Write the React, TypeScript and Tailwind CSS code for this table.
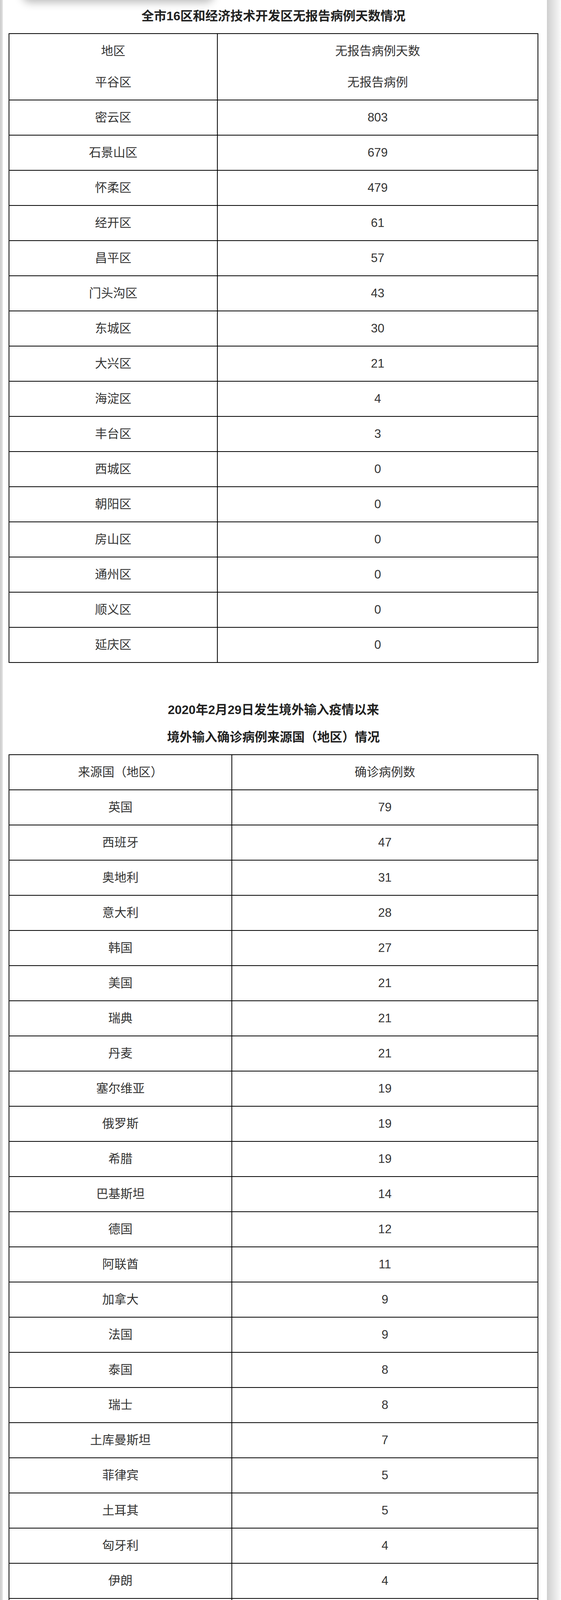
import React from 'react';

const districts: [string, string][] = [
  ['密云区', '803'],
  ['石景山区', '679'],
  ['怀柔区', '479'],
  ['经开区', '61'],
  ['昌平区', '57'],
  ['门头沟区', '43'],
  ['东城区', '30'],
  ['大兴区', '21'],
  ['海淀区', '4'],
  ['丰台区', '3'],
  ['西城区', '0'],
  ['朝阳区', '0'],
  ['房山区', '0'],
  ['通州区', '0'],
  ['顺义区', '0'],
  ['延庆区', '0'],
];

const sources: [string, string][] = [
  ['英国', '79'],
  ['西班牙', '47'],
  ['奥地利', '31'],
  ['意大利', '28'],
  ['韩国', '27'],
  ['美国', '21'],
  ['瑞典', '21'],
  ['丹麦', '21'],
  ['塞尔维亚', '19'],
  ['俄罗斯', '19'],
  ['希腊', '19'],
  ['巴基斯坦', '14'],
  ['德国', '12'],
  ['阿联酋', '11'],
  ['加拿大', '9'],
  ['法国', '9'],
  ['泰国', '8'],
  ['瑞士', '8'],
  ['土库曼斯坦', '7'],
  ['菲律宾', '5'],
  ['土耳其', '5'],
  ['匈牙利', '4'],
  ['伊朗', '4'],
  ['津巴布韦', '3'],
  ['印度尼西亚', '2'],
  ['巴布亚新几内亚', '2'],
  ['摩尔多瓦', '2'],
  ['波兰', '2'],
  ['埃塞俄比亚', '2'],
  ['日本', '2'],
  ['卢森堡', '1'],
  ['挪威', '1'],
  ['比利时', '1'],
  ['巴西', '1'],
  ['荷兰', '1'],
  ['墨西哥', '1'],
  ['约旦', '1'],
  ['赤道几内亚', '1'],
  ['乌兹别克斯坦', '1'],
  ['新加坡', '1'],
  ['中国香港', '249'],
  ['中国台湾', '2'],
  ['合计', '704'],
];

const cell = 'border-2 border-black p-0 text-center align-middle leading-[88px]';

const Row: React.FC<{ name: string; value: string; firstWidth: string }> = ({ name, value, firstWidth }) => (
  <tr className="h-[90px]">
    <td className={`${cell} ${firstWidth}`}>{name}</td>
    <td className={cell}>{value}</td>
  </tr>
);

export default function App() {
  return (
    <div
      className="flex h-[6208px] w-[1435px] overflow-hidden bg-white text-[#333]"
      style={{ fontFamily: '"Liberation Sans", "Noto Sans CJK SC", sans-serif' }}
    >
      {/* left edge */}
      <div className="w-[7px] shrink-0 bg-gradient-to-r from-[#cbcbcb] to-[#e0e0e0]" />

      {/* article */}
      <div className="relative w-[1392px] shrink-0 bg-white pb-[29px] pl-[15px] pr-[22px] pt-[6px]">
        {/* shadow of the card above */}
        <div className="absolute -top-[40px] left-[50px] h-[40px] w-[490px] rounded-[20px] bg-white shadow-[0_6px_22px_rgba(0,0,0,0.28)]" />

        <h2 className="mb-[9px] text-center text-[32px] font-bold leading-[70px] text-[#222]">
          全市16区和经济技术开发区无报告病例天数情况
        </h2>

        <table className="w-full border-collapse text-[31px]">
          <tbody>
            <tr>
              <td className="w-[533px] border-2 border-black py-[4px] text-center align-middle leading-[80px]">
                <div>地区</div>
                <div>平谷区</div>
              </td>
              <td className="border-2 border-black py-[4px] text-center align-middle leading-[80px]">
                <div>无报告病例天数</div>
                <div>无报告病例</div>
              </td>
            </tr>
            {districts.map(([name, value]) => (
              <Row key={name} name={name} value={value} firstWidth="w-[533px]" />
            ))}
          </tbody>
        </table>

        <div className="mb-[9px] mt-[85px] text-center text-[32px] font-bold leading-[70px] text-[#222]">
          <p>2020年2月29日发生境外输入疫情以来</p>
          <p>境外输入确诊病例来源国（地区）情况</p>
        </div>

        <table className="w-full border-collapse text-[31px]">
          <tbody>
            <Row name="来源国（地区）" value="确诊病例数" firstWidth="w-[570px]" />
            {sources.map(([name, value]) => (
              <Row key={name} name={name} value={value} firstWidth="w-[570px]" />
            ))}
          </tbody>
        </table>

        <p className="mt-[73px] text-justify text-[33.6px] leading-[53.3px]">
          提醒广大市民朋友，近期非必要不出京，倡导就地过节，减少不必要的聚餐聚会。请与病例活动轨迹有交集人员、接到健康宝弹窗提示人员立即向社区、单位报告，配合各项防控措施。核酸检测时要有序排队、不扎推、注意手部卫生、保持安全社交距离，核酸检测结果未出之前，自觉做到不聚集、不离京。如身体出现不适，不自行购药服药，及时按规定就医。
        </p>
      </div>

      {/* right shadow */}
      <div className="w-[36px] shrink-0 bg-gradient-to-r from-[#cfcfcf] to-[#fafafa]" />
    </div>
  );
}
